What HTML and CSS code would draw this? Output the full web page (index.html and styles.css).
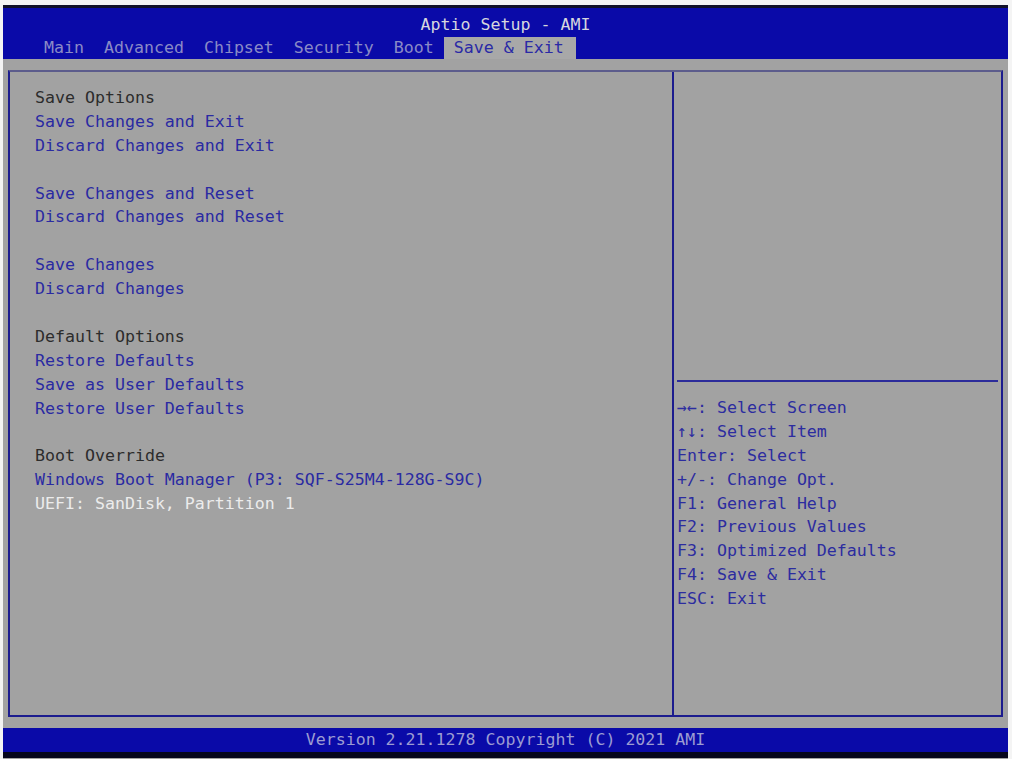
FILE: index.html
```html
<!DOCTYPE html>
<html lang="en">
<head>
  <meta charset="UTF-8">
  <title>Aptio Setup - AMI</title>
  <link rel="stylesheet" href="styles.css">
</head>
<body>
  <div class="screen">
    <div class="header">
      <div class="title">Aptio Setup - AMI</div>
      <div class="tabs">
        <span class="tab">Main</span>
        <span class="tab">Advanced</span>
        <span class="tab">Chipset</span>
        <span class="tab">Security</span>
        <span class="tab">Boot</span>
        <span class="tab active">Save &amp; Exit</span>
      </div>
    </div>

    <div class="frame">
      <div class="left">
        <div class="line label">Save Options</div>
        <div class="line item">Save Changes and Exit</div>
        <div class="line item">Discard Changes and Exit</div>
        <div class="line"></div>
        <div class="line item">Save Changes and Reset</div>
        <div class="line item">Discard Changes and Reset</div>
        <div class="line"></div>
        <div class="line item">Save Changes</div>
        <div class="line item">Discard Changes</div>
        <div class="line"></div>
        <div class="line label">Default Options</div>
        <div class="line item">Restore Defaults</div>
        <div class="line item">Save as User Defaults</div>
        <div class="line item">Restore User Defaults</div>
        <div class="line"></div>
        <div class="line label">Boot Override</div>
        <div class="line item">Windows Boot Manager (P3: SQF-S25M4-128G-S9C)</div>
        <div class="line item selected">UEFI: SanDisk, Partition 1</div>
      </div>

      <div class="right">
        <div class="desc"></div>
        <div class="help">
          <div class="line">→←: Select Screen</div>
          <div class="line">↑↓: Select Item</div>
          <div class="line">Enter: Select</div>
          <div class="line">+/-: Change Opt.</div>
          <div class="line">F1: General Help</div>
          <div class="line">F2: Previous Values</div>
          <div class="line">F3: Optimized Defaults</div>
          <div class="line">F4: Save &amp; Exit</div>
          <div class="line">ESC: Exit</div>
        </div>
      </div>
    </div>

    <div class="footer">Version 2.21.1278 Copyright (C) 2021 AMI</div>
  </div>
</body>
</html>
```

FILE: styles.css
```css
body {
  margin: 0;
  background-color: #f4f4f4;
  font-family: "DejaVu Sans Mono", "Liberation Mono", monospace;
  font-size: 16.6px;
}

.screen {
  margin: 5px 4px 0 3px;
  height: 754px;
  background-color: #a2a2a2;
  display: flex;
  flex-direction: column;
}

.header {
  height: 51px;
  background-color: #0a0aa8;
  border-top: 3px solid #101028;
  display: flex;
  flex-direction: column;
}

.title {
  color: #d6d6de;
  text-align: center;
  padding-top: 6px;
  height: 22px;
  line-height: 22px;
}

.tabs {
  display: flex;
  gap: 20px;
  padding-left: 41px;
  margin-top: 1px;
}

.tab {
  color: #8a8ac6;
  line-height: 22px;
}

.tab.active {
  background-color: #a8a8a8;
  color: #2a2aa6;
  padding: 0 12px 0 10px;
  margin-left: -10px;
}

.frame {
  margin: 11px 5px 0 5px;
  height: 643px;
  display: flex;
  border: 2px solid #1c1c8e;
  border-top-color: #5c5c8c;
}

.left {
  width: 637px;
  padding: 14px 0 0 25px;
  border-right: 2px solid #1c1c8e;
}

.line {
  height: 23.9px;
  line-height: 23.9px;
  white-space: pre;
}

.label {
  color: #2c2c2c;
}

.item {
  color: #2a2aa2;
}

.item.selected {
  color: #ececec;
}

.right {
  flex: 1;
  display: flex;
  flex-direction: column;
}

.desc {
  height: 308px;
  margin: 0 3px 0 3px;
  border-bottom: 2px solid #2c2c9a;
}

.help {
  padding: 14px 0 0 3px;
  color: #2c2ca0;
}

.footer {
  margin-top: 11px;
  height: 24px;
  line-height: 24px;
  background-color: #0a0aa8;
  color: #9c9cd2;
  text-align: center;
  border-bottom: 6px solid #06061c;
}
```
